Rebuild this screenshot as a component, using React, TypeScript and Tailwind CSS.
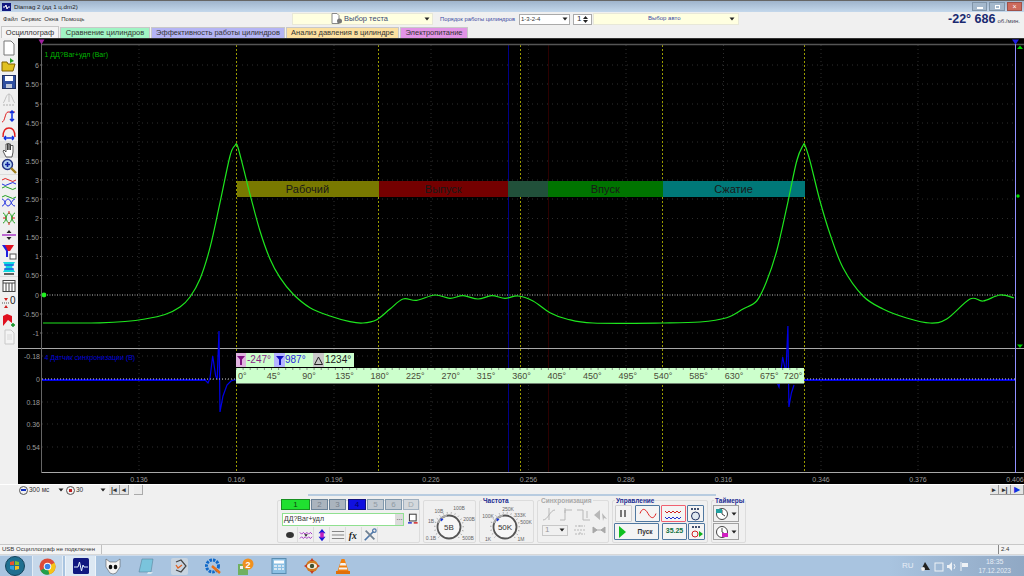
import React from "react";

// pressure trace, in page coordinates
const greenTrace: [number, number][] = [
  [43, 322], [70, 322], [100, 321.8], [125, 320.5], [145, 318], [165, 313.5], [180, 306], [190, 296], [200, 278], [210, 246.7],
  [220, 201.7], [230, 155], [235, 144.5], [237.5, 145], [243.3, 166.7], [250, 193.3], [260, 230], [270, 258],
  [280, 276.7], [293, 293], [310, 306.7], [330, 315], [350, 320.7], [363, 322], [376.7, 318.7], [390, 308],
  [403, 298], [416.7, 299.3], [435, 294], [450, 297.3], [463, 294.7], [478, 298], [491.7, 294.7], [505, 297.3],
  [518, 295], [533, 300], [550, 311.7], [566.7, 318], [593, 322], [663, 322], [700, 321], [726.7, 316.7],
  [743, 308], [756.7, 300], [766.7, 280], [776.7, 250], [786.7, 206.7], [796.7, 160], [803, 144.5], [805, 144.5],
  [810, 160], [820, 200], [830, 233], [843, 266.7], [863, 295], [883, 308], [906.7, 317], [930, 322],
  [946.7, 318], [970, 298], [983, 300], [1000, 294], [1014, 297],
];

const smooth = (pts: [number, number][]) => {
  let d = `M${pts[0][0]} ${pts[0][1]}`;
  for (let i = 0; i < pts.length - 1; i++) {
    const p0 = pts[Math.max(i - 1, 0)];
    const p1 = pts[i];
    const p2 = pts[i + 1];
    const p3 = pts[Math.min(i + 2, pts.length - 1)];
    d += `C${p1[0] + (p2[0] - p0[0]) / 6} ${p1[1] + (p2[1] - p0[1]) / 6} ${p2[0] - (p3[0] - p1[0]) / 6} ${p2[1] - (p3[1] - p1[1]) / 6} ${p2[0]} ${p2[1]}`;
  }
  return d;
};

const yTop = [
  ["6", 64], ["5.50", 83], ["5", 103], ["4.50", 122], ["4", 141], ["3.50", 160], ["3", 179], ["2.50", 198],
  ["2", 217.5], ["1.50", 236.5], ["1", 255.5], ["0.50", 274.5], ["0", 294], ["-0.50", 313], ["-1", 332],
] as [string, number][];
const yBottom = [["-0.18", 355], ["0", 378.5], ["0.18", 401], ["0.36", 423], ["0.54", 446]] as [string, number][];
const xLabels = [
  ["0.136", 139], ["0.166", 236.5], ["0.196", 334], ["0.226", 431], ["0.256", 528.5], ["0.286", 626],
  ["0.316", 723.5], ["0.346", 821], ["0.376", 918], ["0.406", 1015],
] as [string, number][];
const yellowX = [236.5, 378.5, 520.5, 662.5, 804.5];
const degrees = ["0°", "45°", "90°", "135°", "180°", "225°", "270°", "315°", "360°", "405°", "450°", "495°", "540°", "585°", "630°", "675°", "720°"];

const Caret = () => (
  <svg width="6" height="4" viewBox="0 0 6 4" className="shrink-0">
    <path d="M0.5 0.5h5L3 3.5z" fill="#222" />
  </svg>
);

const Chart = () => (
  <div className="relative h-[446px] bg-black border-t border-[#333] overflow-hidden">
    <svg className="absolute inset-0" width="1006" height="446" viewBox="18 38 1006 446" fontFamily="Liberation Sans" fontSize="7">
      {yTop.map(([t, y]) => (
        <g key={t}>
          <line x1="42" x2="1015" y1={y} y2={y} stroke="#2e2e2e" strokeDasharray="1 4" />
          <text x="39" y={y + 2.5} textAnchor="end" fill="#9a9a9a">{t}</text>
          <line x1="40" x2="42" y1={y} y2={y} stroke="#777" />
        </g>
      ))}
      {yBottom.map(([t, y]) => (
        <g key={t}>
          <line x1="42" x2="1015" y1={y} y2={y} stroke="#2e2e2e" strokeDasharray="1 4" />
          <text x="40" y={y + 2.5} textAnchor="end" fill="#9a9a9a">{t}</text>
        </g>
      ))}
      {xLabels.map(([t, x]) => (
        <g key={t}>
          {x < 1000 && <line x1={x} x2={x} y1="44" y2="471" stroke="#2e2e2e" strokeDasharray="1 3" />}
          <text x={x} y="480.5" textAnchor="middle" fill="#9a9a9a">{t}</text>
        </g>
      ))}
      {yellowX.map((x) => (
        <line key={x} x1={x} x2={x} y1="44" y2="471" stroke="#9a9a00" strokeDasharray="2 2" />
      ))}
      <line x1="508.5" x2="508.5" y1="44" y2="471" stroke="#000088" />
      <line x1="548.5" x2="548.5" y1="44" y2="471" stroke="#2c0000" />
      <line x1="42" x2="1024" y1="43.5" y2="43.5" stroke="#555" strokeWidth="1.5" />
      <line x1="18" x2="1024" y1="347.5" y2="347.5" stroke="#a8a8a8" />
      <line x1="42" x2="1024" y1="471.5" y2="471.5" stroke="#a8a8a8" />
      <line x1="41.5" x2="41.5" y1="42" y2="472" stroke="#666" />
      <line x1="1015.5" x2="1015.5" y1="42" y2="472" stroke="#9090ff" />
      <line x1="42" x2="1015" y1="294" y2="294" stroke="#a8a8a8" strokeDasharray="1 1.5" />
      <path d="M38.5 38.5h6L41.5 43.5z" fill="#a020a0" />
      <path d="M1012 38.5h7l-3.5 5z" fill="#2020e0" />
      <path d="M1017 48l3-3.5 3 3.5z" fill="#00d000" />
      <path d="M1017 343.5h6l-3 3.5z" fill="#00d000" />
      <circle cx="1018" cy="195" r="1.7" fill="#00e000" />
      <circle cx="44" cy="294" r="2.4" fill="#20f020" />
      <text x="44.5" y="55.5" fill="#00b800">1 ДД?Ваг+удл (Ваг)</text>
      <text x="44.5" y="359" fill="#0000dc">4 Датчик синхронизации (В)</text>
      {/* sync trace goes under the degree ruler */}
      <path d="M205 379l3 3 2-5 2.7-22 3 20 1.5 3 1.8-48 1 81 3-16 4-11 4-4 3-1h2" stroke="#0000e8" strokeWidth="1.2" fill="none" />
      <path d="M776 379l3 7 3.7-30 3.2 16 2-47 1 81 2.500-14 2.600-8" stroke="#0000e8" strokeWidth="1.2" fill="none" />
      <path d="M42 379H206M804 379H1015" stroke="#0000e8" strokeWidth="2" />
      <path d="M42 378H236M804 378H1015" stroke="#d0d0d0" strokeDasharray="1 2" />
    </svg>

    <div className="absolute left-[218.5px] top-[142px] flex w-[568px] h-[16px] text-[11px] leading-[16px] text-[#181818] text-center">
      <div className="w-[142px] bg-[#797900]">Рабочий</div>
      <div className="w-[129.5px] bg-[#740000]">Выпуск</div>
      <div className="w-[40px] bg-[#21503a]" />
      <div className="w-[114.5px] bg-[#007400]">Впуск</div>
      <div className="w-[142px] bg-[#007878]">Сжатие</div>
    </div>

    <div className="absolute left-[218px] top-[314px] flex w-[118px] h-[14px] bg-[#ccffcc] text-[10px] leading-[14px]">
      <span className="flex w-[10px] items-center justify-center bg-[#e0b4e0]">
        <svg width="8" height="10" viewBox="0 0 8 10"><path d="M0 1h8L5 4.500V10H3V4.500z" fill="#801080" /></svg>
      </span>
      <span className="w-[28px] pl-[1px] text-[#8a2a8a]">-247°</span>
      <span className="flex w-[11px] items-center justify-center bg-[#b4b4ff]">
        <svg width="8" height="10" viewBox="0 0 8 10"><path d="M0 1h8L5 4.500V10H3V4.500z" fill="#1010c0" /></svg>
      </span>
      <span className="w-[28px] text-[#2a2ae0]">987°</span>
      <span className="flex w-[11px] items-center justify-center bg-[#c8c8c8]">
        <svg width="9" height="9" viewBox="0 0 9 9"><path d="M4.500 1L8.500 8.500H.5z" fill="none" stroke="#222" /></svg>
      </span>
      <span className="pl-[1px] text-[#222]">1234°</span>
    </div>

    <div className="absolute left-[218px] top-[329px] w-[568px] h-[16px] bg-[#ccffcc] border-b border-[#708070]">
      <svg className="absolute inset-0" width="568" height="3">
        <path d={Array.from({ length: 80 }, (_, i) => `M${i * 7.1} 0v2`).join("")} stroke="#809080" />
      </svg>
      <div className="flex h-full text-[9px] leading-[16px] text-[#4a4a38] pl-[1px]">
        {degrees.map((d, i) => (
          <span key={d} className={i === 16 ? "w-[22px] -ml-[5px] text-center" : i === 0 ? "w-[19px] pl-[1px]" : "w-[35.5px] text-center"}>{d}</span>
        ))}
      </div>
    </div>

    <svg className="absolute inset-0" width="1006" height="446" viewBox="18 38 1006 446" fill="none">
      <path d={smooth(greenTrace)} stroke="#1ee61e" strokeWidth="1.200" />
    </svg>
  </div>
);

const toolIcons: React.ReactNode[] = [
  <path d="M3 1h7l3 3v11H3z" fill="#fff" stroke="#777" />,
  <><path d="M1 5h5l1 2h7l-2 7H1z" fill="#e0c020" stroke="#806000" /><path d="M9 1l4 3-4 2z" fill="#20a020" /></>,
  <><rect x="1.500" y="1.500" width="13" height="13" fill="#3050a0" stroke="#203060" /><rect x="4" y="2" width="8" height="5" fill="#fff" /><rect x="5" y="10" width="6" height="4" fill="#c0c8d8" /></>,
  <><path d="M2 12c2-1 3-9 6-9s4 8 6 9" fill="none" stroke="#c0c0c0" /><path d="M8 3v8" stroke="#c0c0c0" /><path d="M2 14h12" stroke="#d0d0d0" strokeWidth="2" strokeDasharray="2 1" /></>,
  <><path d="M1 14c3 0 3-10 6-10h7" fill="none" stroke="#e02020" /><path d="M11 3v10M9 5l2-2 2 2M9 11l2 2 2-2" fill="none" stroke="#1030e0" strokeWidth="1.500" /></>,
  <><path d="M2 12C2 5 5 3 8 3s6 2 6 9" fill="none" stroke="#e02020" strokeWidth="1.400" /><path d="M3 13h10M3 13l2-2M3 13l2 2M13 13l-2-2M13 13l-2 2" fill="none" stroke="#1030e0" strokeWidth="1.400" /></>,
  <path d="M5 15l-3-6 1-1 2 2V2h1.500v6V1.500h1.500V8 2h1.500v6V3.500H12V10l-1 5z" fill="#fff" stroke="#333" strokeWidth=".8" />,
  <><circle cx="6.500" cy="6.500" r="5" fill="#b0d0f0" stroke="#203080" strokeWidth="1.400" /><path d="M4 6.500h5M6.500 4v5" stroke="#1020a0" strokeWidth="1.600" /><path d="M10 10l5 5" stroke="#a08020" strokeWidth="2.400" /></>,
  <><path d="M1 4q3-3 7 0t7 0" fill="none" stroke="#e02020" /><path d="M1 8q3 3 7 0t7 0" fill="none" stroke="#2030e0" /><path d="M1 12q3-3 7 0t7 0" fill="none" stroke="#20a020" /></>,
  <><path d="M1 4q3-3 7 0t7 0" fill="none" stroke="#20a020" /><path d="M1 13C4 13 4 6 7 6s3 7 7 7M1 6c3 0 3 7 6 7s4-7 7-7" fill="none" stroke="#2030e0" /></>,
  <><path d="M2 13C5 13 5 3 8 3s3 10 6 10M2 3c3 0 3 10 6 10s3-10 6-10" fill="none" stroke="#20a020" /><path d="M8 1v3M8 12v3M5 8h-3M14 8h-3" stroke="#e02020" /></>,
  <><path d="M1 8h14" stroke="#a020c0" strokeWidth="1.300" /><path d="M8 3l-2.500 3h5zM8 13l-2.500-3h5z" fill="#222" /></>,
  <><path d="M1 1h9L7 7v6H5V7z" fill="#2020e0" /><path d="M4 1h9L9 7H7z" fill="#e01020" /><rect x="9" y="10" width="6" height="5" fill="#fff" stroke="#555" /></>,
  <><path d="M2 2h12l-3 5 3 5H2l3-5z" fill="#10d8e0" /><path d="M3 5h10M3 9h10" stroke="#2020e0" /><path d="M3 14h10" stroke="#222" strokeWidth="1.400" /></>,
  <><rect x="2" y="2.500" width="12" height="11" fill="#fff" stroke="#444" /><path d="M2 5h12M5 5v8M8 5v8M11 5v8" stroke="#444" /></>,
  <><path d="M1 8h8" stroke="#555" strokeDasharray="1 1" /><path d="M5 6L3 3h4zM5 10l-2 3h4z" fill="#d02020" /><text x="9" y="9" fontSize="10" fontFamily="Liberation Sans" fill="#222">0</text></>,
  <><path d="M2 14V4l4-2 5 2v7L7 8z" fill="#e01020" /><path d="M12 11v4M10 13h4" stroke="#109020" strokeWidth="1.400" /></>,
  <><path d="M4 1h6l3 3v11H4z" fill="#f4f4f4" stroke="#c8c8c8" /><path d="M6 6h5M6 8h5M6 10h5" stroke="#d8d8d8" /></>,
];

const LeftToolbar = () => (
  <div className="w-[18px] shrink-0 flex flex-col pt-[1px]">
    {toolIcons.map((icon, i) => (
      <div key={i} className={`h-[17px] flex items-center justify-center ${i === 6 ? "bg-[#e4e4e4]" : ""} ${i === 7 || i === 13 ? "border-b border-[#dcdcdc]" : ""}`}>
        <svg width="16" height="16" viewBox="0 0 16 16">{icon}</svg>
      </div>
    ))}
  </div>
);

const knobPath = (cx: number, cy: number) =>
  Array.from({ length: 18 }, (_, i) => {
    const a = ((135 + i * 16) * Math.PI) / 180;
    return `M${cx + 13.5 * Math.cos(a)} ${cy + 13.5 * Math.sin(a)}L${cx + 15 * Math.cos(a)} ${cy + 15 * Math.sin(a)}`;
  }).join("");

const Knob = ({ value, labels }: { value: string; labels: [string, number, number][] }) => (
  <svg width="53" height="42" viewBox="0 0 53 42" fontFamily="Liberation Sans" fontSize="5" fill="#666" className="block">
    <path d={knobPath(25, 26)} stroke="#888" strokeWidth=".7" fill="none" />
    <circle cx="25" cy="26" r="11.500" fill="#f6f6f6" stroke="#555" strokeWidth="1.800" />
    <path d="M14 22a12 12 0 0 1 9-7.500" stroke="#aaa" strokeWidth="2" fill="none" />
    <path d="M16.500 17l3 1.500-2.500 2z" fill="#1030e0" />
    <text x="25" y="29" textAnchor="middle" fontSize="8" fill="#333">{value}</text>
    {labels.map(([t, x, y]) => (
      <text key={t} x={x} y={y} textAnchor="middle">{t}</text>
    ))}
  </svg>
);

const Group = ({ title, width, muted, children }: { title?: string; width: string; muted?: boolean; children: React.ReactNode }) => (
  <div className={`relative h-[43px] border border-[#dcdcdc] rounded-[2px] ${width}`}>
    {title && (
      <span className={`absolute left-[2px] -top-[4px] px-[1px] bg-[#f0f0f0] text-[6.500px] leading-[8px] font-bold whitespace-nowrap ${muted ? "text-[#a8a8a8]" : "text-[#1a2a90]"}`}>{title}</span>
    )}
    {children}
  </div>
);

const ChannelButton = ({ label, width, tone }: { label: string; width: string; tone: string }) => (
  <div className={`h-[11px] border flex items-center justify-center text-[8px] ${width} ${tone}`}>{label}</div>
);

const IconBtn = ({ w, h, border, children }: { w: string; h: string; border: string; children: React.ReactNode }) => (
  <div className={`${w} ${h} border ${border} rounded-[1px] bg-[#f4f4f4] flex items-center justify-center shrink-0`}>{children}</div>
);

const ControlPanel = () => (
  <div className="h-[50px] relative flex gap-[3px] pl-[277px] pt-[5px] border-b border-[#c8c8c8]">
    <div className="absolute left-[308px] top-[-1px] w-[408px] h-[2px] border-y border-[#b8cce0] bg-[#e8f0f8]" />
    <Group width="w-[143px]">
      <div className="flex gap-[1px] pl-[3px] -mt-[2px]">
        <ChannelButton label="1" width="w-[29px]" tone="bg-[#20e030] border-[#189020] text-[#114411]" />
        <ChannelButton label="2" width="w-[17px]" tone="bg-[#aab4be] border-[#6a8298] text-[#78828c]" />
        <ChannelButton label="3" width="w-[17px]" tone="bg-[#aab4be] border-[#6a8298] text-[#78828c]" />
        <ChannelButton label="4" width="w-[18px] ml-[1px]" tone="bg-[#1010e0] border-[#101080] text-[#000066]" />
        <ChannelButton label="5" width="w-[17px]" tone="bg-[#c0c8d0] border-[#8098ac] text-[#909aa4]" />
        <ChannelButton label="6" width="w-[17px]" tone="bg-[#c0c8d0] border-[#8098ac] text-[#909aa4]" />
        <ChannelButton label="D" width="w-[16px]" tone="bg-[#d4d8dc] border-[#a0b0c0] text-[#a0a8b0]" />
      </div>
      <div className="flex items-center gap-[3px] pl-[4px] mt-[3px]">
        <div className="w-[127px] h-[13px] border border-[#90e090] bg-white flex items-center justify-between text-[7px] text-[#333] pl-[1px]">
          ДД?Ваг+удл
          <span className="w-[8px] h-full bg-[#dcdcdc] text-center leading-[8px] text-[7px]">...</span>
        </div>
        <svg width="12" height="13" viewBox="0 0 12 13">
          <rect x="2.500" y="1" width="7" height="7" fill="#fff" stroke="#333" />
          <path d="M1 10h4" stroke="#2030d0" strokeWidth="1.500" />
          <path d="M7 10h4" stroke="#d02020" strokeWidth="1.500" />
        </svg>
      </div>
      <div className="flex items-center gap-[1px] pl-[5px] mt-[1px] h-[15px]">
        {[
          <ellipse cx="8" cy="8" rx="4.500" ry="3.500" fill="#333" />,
          <><path d="M1 5l2 2 2-2 2 2 2-2 2 2 2-2 2 2" fill="none" stroke="#a020c0" /><path d="M1 12l2-2 2 2 2-2 2 2 2-2 2 2 2-2" fill="none" stroke="#a020c0" /><path d="M6 7h4L8 10z" fill="#222" /></>,
          <><path d="M8 1l4 5H4zM8 15l4-5H4z" fill="#1818d8" /><rect x="6" y="5" width="4" height="6" fill="#c020c0" /></>,
          <path d="M1 4h14M1 8h14M1 12h14" stroke="#777" />,
          <text x="2" y="12" fontSize="11" fontFamily="Liberation Serif" fontStyle="italic" fontWeight="bold" fill="#222">fx</text>,
          <><path d="M2 14L12 4" stroke="#5078a8" strokeWidth="2" /><path d="M3 3l10 10" stroke="#708090" strokeWidth="2" /><circle cx="13" cy="3" r="2" fill="none" stroke="#5078a8" strokeWidth="1.400" /></>,
        ].map((icon, i) => (
          <div key={i} className="w-[15px] h-[15px] flex items-center justify-center border-r border-[#dcdcdc]">
            <svg width="14" height="14" viewBox="0 0 16 16">{icon}</svg>
          </div>
        ))}
      </div>
    </Group>
    <Group width="w-[53px]">
      <Knob value="5В" labels={[["10В", 15, 12], ["100В", 35, 9], ["200В", 45, 20], ["500В", 44, 39], ["0.1В", 7, 39], ["1В", 7, 22]]} />
    </Group>
    <Group title="Частота" width="w-[55px]">
      <Knob value="50K" labels={[["100K", 8, 17], ["250K", 28, 10], ["333K", 40, 16], ["500K", 46, 23], ["1M", 41, 40], ["1K", 8, 40]]} />
    </Group>
    <Group title="Синхронизация" width="w-[72px]" muted>
      <div className="flex gap-[3px] pl-[4px] pt-[6px]">
        {[
          <path d="M1 13C6 13 8 3 13 3M7 1v12" fill="none" stroke="#b8b8b8" />,
          <path d="M1 13h5V3h7M6 1v5" fill="none" stroke="#b8b8b8" />,
          <path d="M1 3h6v10h7M11 4v7" fill="none" stroke="#b8b8b8" />,
          <path d="M1 8l6-5v10zM9 6l5 6-3-1-1 3z" fill="#b8b8b8" />,
        ].map((icon, i) => (
          <svg key={i} width="14" height="14" viewBox="0 0 14 14">{icon}</svg>
        ))}
      </div>
      <div className="flex items-center gap-[5px] pl-[4px] pt-[3px]">
        <div className="w-[26px] h-[11px] border border-[#c8c8c8] flex items-center justify-between px-[2px] text-[8px] text-[#999]">1<Caret /></div>
        <svg width="14" height="12" viewBox="0 0 14 12"><path d="M1 6h12M7 1v3M7 8v3M2 2h10M2 10h10" stroke="#b8b8b8" strokeDasharray="2 1" /></svg>
        <svg width="14" height="12" viewBox="0 0 14 12"><path d="M1 3v6l4-3zM13 3v6L9 6zM4 6h6" fill="#a8a8a8" stroke="#a8a8a8" /></svg>
      </div>
    </Group>
    <Group title="Управление" width="w-[96px]">
      <div className="flex pl-[2px] pt-[4px] gap-[1px]">
        <IconBtn w="w-[17px]" h="h-[17px]" border="border-[#d0d0d0]">
          <svg width="9" height="9" viewBox="0 0 9 9"><path d="M2 1v7M6 1v7" stroke="#777" strokeWidth="2" /></svg>
        </IconBtn>
        <div className="w-[1px]" />
        <IconBtn w="w-[25px]" h="h-[17px]" border="border-[#5078a0]">
          <svg width="18" height="11" viewBox="0 0 18 11"><path d="M1 5.500C3 0 6 0 9 5.500s6 5.500 8 0" fill="none" stroke="#e02020" /></svg>
        </IconBtn>
        <IconBtn w="w-[25px]" h="h-[17px]" border="border-[#f06070]">
          <svg width="20" height="12" viewBox="0 0 20 12"><path d="M1 3l2 2 2-2 2 2 2-2 2 2 2-2 2 2 2-2" fill="none" stroke="#d02020" /><path d="M1 9l2 2 2-2 2 2 2-2 2 2 2-2 2 2 2-2" fill="none" stroke="#2030d0" /></svg>
        </IconBtn>
        <IconBtn w="w-[17px]" h="h-[17px]" border="border-[#5078a0]">
          <svg width="13" height="14" viewBox="0 0 13 14"><circle cx="6.500" cy="9" r="4" fill="#e0e8f0" stroke="#203060" /><path d="M2 2h9" stroke="#405070" strokeWidth="2" strokeDasharray="2 1" /></svg>
        </IconBtn>
      </div>
      <div className="flex pl-[1px] pt-[1px] gap-[1px]">
        <IconBtn w="w-[45px]" h="h-[17px]" border="border-[#5078a0]">
          <svg width="8" height="12" viewBox="0 0 8 12"><path d="M1 0l7 6-7 6z" fill="#10c020" /></svg>
          <span className="text-[6.500px] font-bold text-[#333] ml-[12px] mr-[3px]">Пуск</span>
        </IconBtn>
        <div className="w-[1px]" />
        <IconBtn w="w-[25px]" h="h-[17px]" border="border-[#5078a0]">
          <span className="text-[7px] font-bold text-[#107040]">35.25</span>
        </IconBtn>
        <IconBtn w="w-[17px]" h="h-[17px]" border="border-[#5078a0]">
          <svg width="13" height="14" viewBox="0 0 13 14"><path d="M2 2h8" stroke="#405070" strokeWidth="2" strokeDasharray="2 1" /><circle cx="5" cy="9" r="3" fill="none" stroke="#d02020" /><path d="M9 6l4 3-4 3z" fill="#10b020" /></svg>
        </IconBtn>
      </div>
    </Group>
    <Group title="Таймеры" width="w-[35px]">
      {["#20a0a0", "#d020c0"].map((c, i) => (
        <div key={c} className={`ml-[1px] w-[26px] h-[17px] border border-[#a0a0a0] bg-[#f0f0f0] flex items-center justify-center gap-[2px] ${i === 0 ? "mt-[4px]" : "mt-[1px]"}`}>
          <svg width="14" height="14" viewBox="0 0 14 14">
            <circle cx="7" cy="7" r="5.500" fill="#fff" stroke="#444" />
            <path d="M7 3v4l3 2" fill="none" stroke="#444" />
            <rect x={i === 0 ? 1 : 7} y={i === 0 ? 2 : 8} width="6" height="4" fill={c} />
          </svg>
          <Caret />
        </div>
      ))}
    </Group>
  </div>
);

const Taskbar = () => (
  <div className="h-[21px] flex items-center bg-[#a9c4e0] border-t border-[#cfdceb]">
    <div className="w-[30px] flex justify-center">
      <svg width="20" height="20" viewBox="0 0 20 20">
        <circle cx="10" cy="10" r="9.500" fill="#1f6f90" stroke="#16445c" />
        <path d="M5 6l4-1v4H5z" fill="#e85030" />
        <path d="M10 5l4 1v3h-4z" fill="#80c030" />
        <path d="M5 10h4v4l-4-1z" fill="#30a0e0" />
        <path d="M10 10h4v3l-4 1z" fill="#f0c020" />
      </svg>
    </div>
    <div className="w-[31px] h-full ml-[2px] bg-[#c6d8ea] border-x border-[#e4edf5] flex items-center justify-center">
      <svg width="17" height="17" viewBox="0 0 18 18">
        <circle cx="9" cy="9" r="8.500" fill="#dd4b39" />
        <path d="M9 9L1.600 13.200A8.500 8.500 0 0 0 11 17.300z" fill="#20a04a" />
        <path d="M9 9L11 17.300A8.500 8.500 0 0 0 16.500 5z" fill="#f5c518" />
        <circle cx="9" cy="9" r="4" fill="#fff" />
        <circle cx="9" cy="9" r="3" fill="#3a80e8" />
      </svg>
    </div>
    <div className="w-[31px] h-full ml-[2px] bg-[#dce8f3] border-x border-[#eef4fa] flex items-center justify-center">
      <svg width="16" height="16" viewBox="0 0 16 16">
        <rect width="16" height="16" rx="1.500" fill="#101880" />
        <path d="M1 9h4l1.500-5 2 9 1.500-6 1 2h4" fill="none" stroke="#e0f0ff" />
      </svg>
    </div>
    <div className="flex items-center pl-[9px] gap-[17px]">
      <svg width="16" height="17" viewBox="0 0 16 17">
        <path d="M1 1l4 3h6l4-3v8l-4 6-3 1-3-1-4-6z" fill="#f4f4f4" stroke="#444" strokeWidth=".5" />
        <ellipse cx="5.500" cy="9" rx="1.800" ry="2.200" fill="#111" />
        <ellipse cx="10.500" cy="9" rx="1.800" ry="2.200" fill="#111" />
      </svg>
      <svg width="16" height="16" viewBox="0 0 16 16">
        <path d="M1 14L4 1h11l-2 13z" fill="#7ac4dc" stroke="#507890" strokeWidth=".5" />
        <path d="M10 14h5l-2 2h-4z" fill="#d8e4ec" />
      </svg>
      <div className="w-[17px] h-[17px] bg-[#c8d4e0] rounded-[2px] flex items-center justify-center">
        <svg width="14" height="14" viewBox="0 0 14 14">
          <path d="M3 3l5-2 5 6-5 6-5-2" fill="none" stroke="#444" strokeWidth="1.200" />
          <path d="M3 6l2 3 4-3" fill="none" stroke="#e06020" strokeWidth="1.300" />
        </svg>
      </div>
      <svg width="16" height="16" viewBox="0 0 16 16">
        <circle cx="7.500" cy="8" r="6" fill="none" stroke="#1068c8" strokeWidth="3" strokeDasharray="2.500 1" />
        <path d="M7 8l8 7" stroke="#e87018" strokeWidth="2.500" />
      </svg>
      <svg width="16" height="17" viewBox="0 0 16 17">
        <rect x="0" y="6" width="10" height="11" fill="#70b060" />
        <rect x="2" y="8" width="3" height="3" fill="#f0f0f0" />
        <circle cx="10" cy="6" r="5.500" fill="#f09020" />
        <text x="7.500" y="9.500" fontSize="9" fontWeight="bold" fontFamily="Liberation Sans" fill="#fff">2</text>
      </svg>
      <svg width="16" height="16" viewBox="0 0 16 16">
        <rect x="1" y="0.500" width="14" height="15" fill="#8cc0e4" stroke="#5a8cb0" />
        <rect x="3" y="2.500" width="10" height="3" fill="#fff" />
        <path d="M3 8h3M7 8h3M11 8h2M3 11h3M7 11h3M11 11h2" stroke="#f0f4f8" strokeWidth="1.500" />
      </svg>
      <svg width="16" height="16" viewBox="0 0 16 16">
        <circle cx="8" cy="8" r="6" fill="#d07a20" />
        <path d="M8 0l2 3H6zM8 16l2-3H6zM0 8l3-2v4zM16 8l-3-2v4z" fill="#c84020" />
        <ellipse cx="8" cy="8" rx="5" ry="3" fill="#f4f0e0" />
        <circle cx="8" cy="8" r="2.200" fill="#405030" />
      </svg>
      <svg width="14" height="17" viewBox="0 0 14 17" className="-ml-[1px]">
        <path d="M5.500 1h3l4 12H1.500z" fill="#f08010" />
        <path d="M4.500 5h5l.7 2.500H3.800zM3.200 9.500h7.600l.5 2H2.700z" fill="#f4f4f4" />
        <path d="M0 13h14v3H0z" fill="#e07008" />
      </svg>
    </div>
    <div className="ml-auto flex items-center h-full pr-[13px] text-[6.500px] text-[#e6edf5] bg-linear-to-r from-[#a9c4e0] to-[#90a8c4] pl-[14px]">
      <span className="mr-[7px] text-[8px]">RU</span>
      <span className="flex items-center gap-[2px] mr-[8px]">
        <svg width="11" height="11" viewBox="0 0 11 11"><path d="M1 9l4-8 5 8z" fill="#222" /><circle cx="3" cy="8" r="2" fill="#eee" /></svg>
        <svg width="11" height="11" viewBox="0 0 11 11"><rect x="2" y="2" width="8" height="8" fill="none" stroke="#eef2f6" /></svg>
        <svg width="11" height="11" viewBox="0 0 11 11"><path d="M1 4h2l3-3v9L3 7H1z" fill="#eef2f6" /><path d="M8 3q2 2.500 0 5" stroke="#eef2f6" fill="none" /></svg>
        <svg width="11" height="11" viewBox="0 0 11 11"><path d="M2 1v9" stroke="#eef2f6" /><path d="M3 2h6v4H3z" fill="#eef2f6" /></svg>
      </span>
      <div className="text-center leading-[9px]">
        <div className="text-[7px]">18:35</div>
        <div>17.12.2023</div>
      </div>
    </div>
  </div>
);

const tabs = [
  ["Сравнение цилиндров", "w-[90px] bg-[#a0f4c4]"],
  ["Эффективность работы цилиндров", "w-[134px] bg-[#b4b4f4]"],
  ["Анализ давления в цилиндре", "w-[113px] bg-[#fce0a0]"],
  ["Электропитание", "w-[68px] bg-[#e294e6]"],
];

export default function App() {
  return (
    <div className="w-[1024px] h-[576px] overflow-hidden flex flex-col bg-[#f0f0f0] font-['Liberation_Sans',sans-serif] text-[8px] text-[#333]">
      {/* title bar */}
      <div className="h-[12px] flex items-center bg-linear-to-b from-[#9fb4cc] to-[#c4d8ec] border-t border-[#666] pl-[2px]">
        <svg width="9" height="8" viewBox="0 0 9 8"><rect width="9" height="8" fill="#101880" /><path d="M1 4h2l1-2 1 4 1-2h2" stroke="#fff" fill="none" /></svg>
        <span className="ml-[3px] text-[6.200px] text-[#222]">Diamag 2 (дд 1 ц.dm2)</span>
        <div className="ml-auto flex gap-[2px] pr-[2px]">
          <div className="w-[15px] h-[9px] bg-[#a4b8cc] border border-[#8094a8] flex items-end justify-center"><div className="w-[6px] h-[2px] mb-[1px] bg-white" /></div>
          <div className="w-[16px] h-[9px] bg-[#a4b8cc] border border-[#8094a8] flex items-center justify-center"><div className="w-[5px] h-[4px] border border-white" /></div>
          <div className="w-[15px] h-[9px] bg-[#cc6a5c] border border-[#a05048] text-white text-[7px] leading-[7px] text-center">×</div>
        </div>
      </div>

      {/* menu and selectors */}
      <div className="h-[14px] flex items-center relative">
        <div className="flex gap-[3px] pl-[3px] w-[292px] text-[6px]">
          <span>Файл</span><span>Сервис</span><span>Окна</span><span>Помощь</span>
        </div>
        <div className="w-[141px] h-[12px] -mt-[1px] bg-[#ffffe0] border border-[#e8e8d8] flex items-center justify-between pr-[2px]">
          <span className="flex items-center ml-[38px] text-[7.500px] text-[#3a4a70]">
            <svg width="12" height="11" viewBox="0 0 12 11" className="mr-[1px]"><path d="M1 .5h5l2 2v8H1z" fill="#fff" stroke="#888" /><circle cx="8.500" cy="8" r="2.500" fill="#777" /></svg>
            Выбор теста
          </span>
          <Caret />
        </div>
        <span className="w-[86px] pl-[7px] text-[5.800px] text-[#3a4aa0] whitespace-nowrap">Порядок работы цилиндров</span>
        <div className="w-[51px] h-[11px] bg-white border border-[#aaa] flex items-center justify-between px-[1px] text-[6px]">1-3-2-4<Caret /></div>
        <div className="w-[19px] h-[11px] ml-[3px] bg-white border border-[#aaa] flex items-center justify-between px-[3px] text-[8px]">1
          <span className="flex flex-col gap-[1px]">
            <svg width="5" height="3" viewBox="0 0 5 3"><path d="M0 3h5L2.500 0z" fill="#222" /></svg>
            <svg width="5" height="3" viewBox="0 0 5 3"><path d="M0 0h5L2.500 3z" fill="#222" /></svg>
          </span>
        </div>
        <div className="w-[146px] h-[12px] ml-[1px] -mt-[1px] bg-[#ffffe0] border border-[#e8e8d8] flex items-center justify-between pr-[3px] text-[6px] text-[#3a4aa0]">
          <span className="ml-[54px]">Выбор авто</span>
          <Caret />
        </div>
        <div className="ml-auto pr-[4px] flex items-baseline whitespace-nowrap text-[#1a2a70]">
          <span className="text-[12.500px] font-bold">-22° 686</span>
          <span className="ml-[2px] text-[6px] text-[#445]">об./мин.</span>
        </div>
      </div>

      {/* tabs */}
      <div className="h-[12px] flex items-end pl-[1px] gap-[1px] text-[7.500px]">
        <div className="w-[58px] h-[12px] bg-[#f4f4f4] border border-b-0 border-[#c8c8c8] text-center leading-[11px]">Осциллограф</div>
        {tabs.map(([t, c]) => (
          <div key={t} className={`h-[11px] border border-b-0 border-[#c8c8c8] text-center leading-[10px] whitespace-nowrap ${c}`}>{t}</div>
        ))}
      </div>

      <div className="h-[446px] flex">
        <LeftToolbar />
        <div className="flex-1"><Chart /></div>
      </div>

      {/* timebase row */}
      <div className="h-[11px] flex items-center border-t border-white pl-[19px] text-[6.500px]">
        <div className="w-[9px] h-[9px] rounded-full border border-[#555] flex items-center justify-center"><div className="w-[5px] h-[2px] bg-[#1030c0]" /></div>
        <div className="w-[36px] ml-[1px] flex items-center justify-between pr-[1px]">300 мс<Caret /></div>
        <div className="w-[9px] h-[9px] ml-[1px] rounded-full border border-[#555] flex items-center justify-center"><div className="w-[3px] h-[3px] bg-[#c02020]" /></div>
        <div className="w-[31px] ml-[1px] flex items-center justify-between pr-[1px]">30<Caret /></div>
        <div className="w-[11px] h-[10px] ml-[2px] bg-[#e4e4e4] border-r border-b border-[#999] text-center leading-[9px] text-[7px] font-bold">|◂</div>
        <div className="w-[9px] h-[10px] bg-[#e4e4e4] border-r border-b border-[#999] text-center leading-[9px] text-[7px] font-bold">◂</div>
        <div className="w-[9px] h-[10px] ml-[5px] bg-[#ececec] border-r border-b border-[#aaa]" />
        <div className="ml-auto flex">
          <div className="w-[9px] h-[10px] bg-[#e4e4e4] border-r border-b border-[#999] text-center leading-[9px] text-[7px] font-bold">▸</div>
          <div className="w-[12px] h-[10px] bg-[#e4e4e4] border-r border-b border-[#999] text-center leading-[9px] text-[7px] font-bold">▸|</div>
          <div className="w-[13px] h-[10px] bg-[#e4e4e4] border-r border-b border-[#999] text-center leading-[9px] text-[8px] text-[#1030e0]">▶</div>
        </div>
      </div>

      <ControlPanel />

      {/* status bar */}
      <div className="h-[10px] flex items-center text-[6px] border-b border-[#d8d8d8] bg-[#f4f4f4]">
        <span className="w-[102px] pl-[2px] border-r border-[#c0c0c0] whitespace-nowrap">USB Осциллограф не подключен</span>
        <span className="ml-auto w-[26px] pl-[2px] border-l border-[#888]">2.4</span>
      </div>

      <Taskbar />
    </div>
  );
}
